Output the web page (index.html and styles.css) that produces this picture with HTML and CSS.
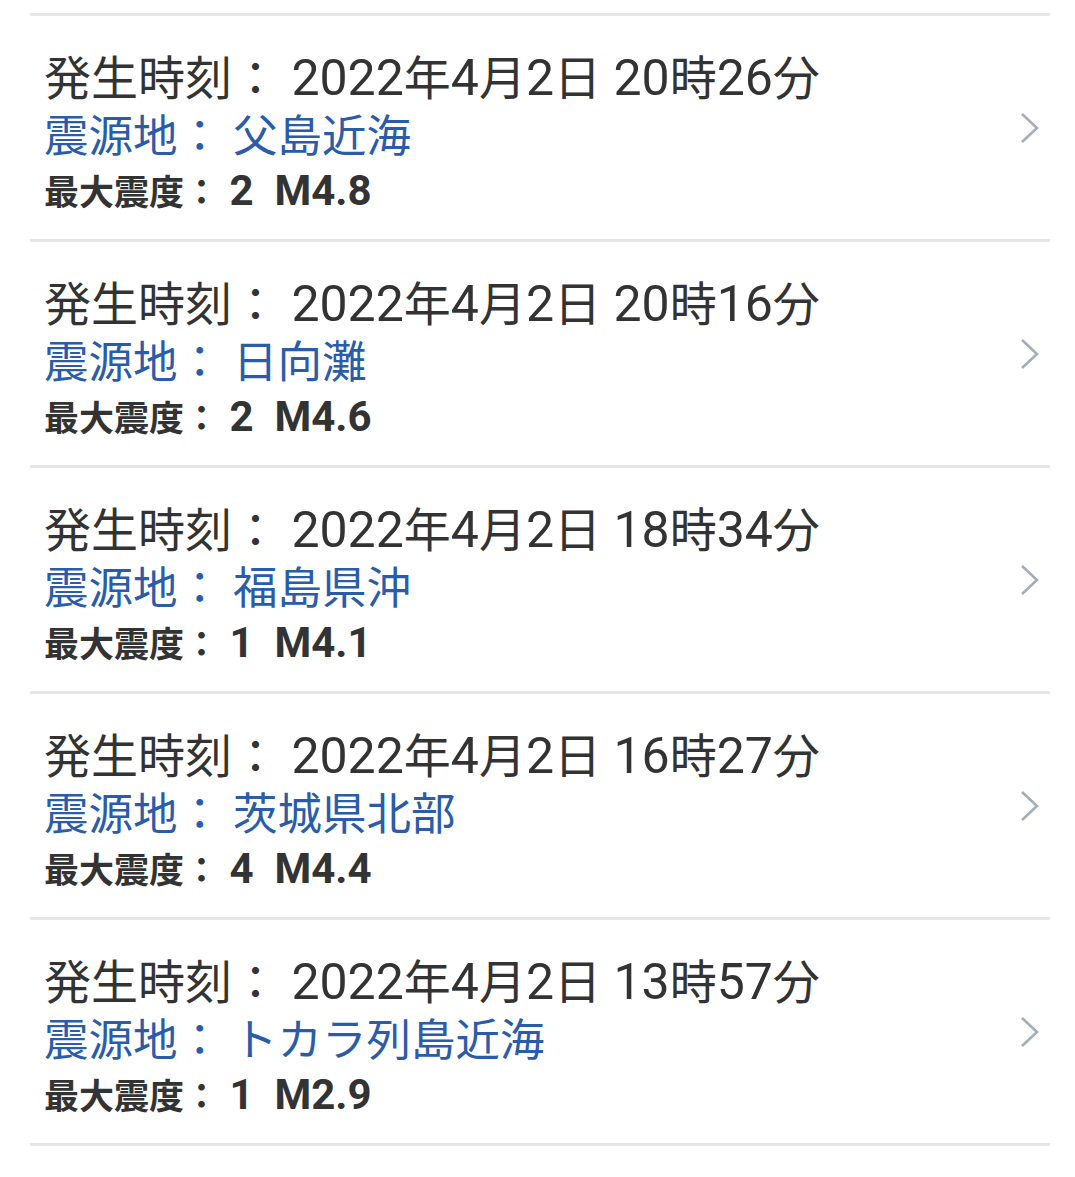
FILE: index.html
```html
<!DOCTYPE html>
<html lang="ja">
<head>
<meta charset="utf-8">
<link rel="stylesheet" href="styles.css">
</head>
<body>
<ul class="quake-list">
  <li class="quake">
    <div class="info">
      <div class="time">発生時刻：<span class="lat"> 2022</span>年<span class="lat">4</span>月<span class="lat">2</span>日<span class="lat"> 20</span>時<span class="lat">26</span>分</div>
      <div class="place">震源地： 父島近海</div>
      <div class="mag">最大震度：<span class="lat"> 2  M4.8</span></div>
    </div>
    <svg class="chev" viewBox="0 0 20 32" width="20" height="32"><path d="M2 2 L17 16 L2 30" fill="none" stroke="#a5aeb8" stroke-width="2.6"/></svg>
  </li>
  <li class="quake">
    <div class="info">
      <div class="time">発生時刻：<span class="lat"> 2022</span>年<span class="lat">4</span>月<span class="lat">2</span>日<span class="lat"> 20</span>時<span class="lat">16</span>分</div>
      <div class="place">震源地： 日向灘</div>
      <div class="mag">最大震度：<span class="lat"> 2  M4.6</span></div>
    </div>
    <svg class="chev" viewBox="0 0 20 32" width="20" height="32"><path d="M2 2 L17 16 L2 30" fill="none" stroke="#a5aeb8" stroke-width="2.6"/></svg>
  </li>
  <li class="quake">
    <div class="info">
      <div class="time">発生時刻：<span class="lat"> 2022</span>年<span class="lat">4</span>月<span class="lat">2</span>日<span class="lat"> 18</span>時<span class="lat">34</span>分</div>
      <div class="place">震源地： 福島県沖</div>
      <div class="mag">最大震度：<span class="lat"> 1  M4.1</span></div>
    </div>
    <svg class="chev" viewBox="0 0 20 32" width="20" height="32"><path d="M2 2 L17 16 L2 30" fill="none" stroke="#a5aeb8" stroke-width="2.6"/></svg>
  </li>
  <li class="quake">
    <div class="info">
      <div class="time">発生時刻：<span class="lat"> 2022</span>年<span class="lat">4</span>月<span class="lat">2</span>日<span class="lat"> 16</span>時<span class="lat">27</span>分</div>
      <div class="place">震源地： 茨城県北部</div>
      <div class="mag">最大震度：<span class="lat"> 4  M4.4</span></div>
    </div>
    <svg class="chev" viewBox="0 0 20 32" width="20" height="32"><path d="M2 2 L17 16 L2 30" fill="none" stroke="#a5aeb8" stroke-width="2.6"/></svg>
  </li>
  <li class="quake">
    <div class="info">
      <div class="time">発生時刻：<span class="lat"> 2022</span>年<span class="lat">4</span>月<span class="lat">2</span>日<span class="lat"> 13</span>時<span class="lat">57</span>分</div>
      <div class="place">震源地： トカラ列島近海</div>
      <div class="mag">最大震度：<span class="lat"> 1  M2.9</span></div>
    </div>
    <svg class="chev" viewBox="0 0 20 32" width="20" height="32"><path d="M2 2 L17 16 L2 30" fill="none" stroke="#a5aeb8" stroke-width="2.6"/></svg>
  </li>
</ul>
</body>
</html>
```
FILE: styles.css
```css
html, body {
  margin: 0;
  padding: 0;
  background: #ffffff;
}
body {
  font-family: Roboto, "Noto Sans CJK JP", sans-serif;
  color: #333333;
}
.quake-list {
  list-style: none;
  margin: 13px 25px 0 30px;
  padding: 0;
  border-bottom: 3px solid #e6e6e6;
}
.quake {
  display: flex;
  align-items: center;
  height: 223px;
  border-top: 3px solid #e6e6e6;
  padding: 0 10px 0 14px;
}
.info {
  flex: 1;
  padding-top: 10px;
}
.time,
.place,
.mag {
  white-space: pre;
}
.time {
  font-size: 47px;
  line-height: 59px;
  color: #333333;
}
.time .lat {
  font-size: 50px;
}
.place {
  font-size: 44.5px;
  line-height: 59px;
  color: #2a5caa;
}
.mag {
  font-size: 35px;
  line-height: 47px;
  font-weight: bold;
  color: #333333;
}
.mag .lat {
  font-size: 42px;
}
.chev {
  flex: none;
  display: block;
}
```
